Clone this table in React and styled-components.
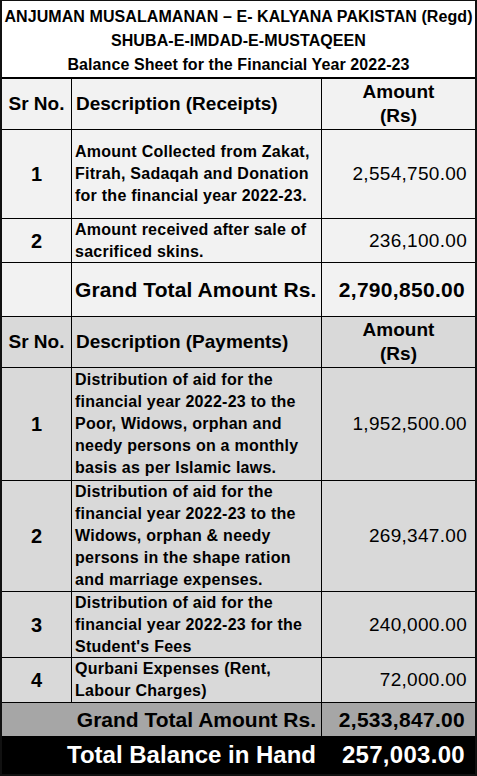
import styled, {createGlobalStyle} from 'styled-components';

const GlobalStyle = createGlobalStyle`
    html, body {
        margin: 0;
        padding: 0;
        background: #ffffff;
    }
    * {
        box-sizing: border-box;
    }
`;

const Sheet = styled.div`
    width: 477px;
    border: 2px solid #111;
    border-top-width: 1px;
    font-family: "Liberation Sans", Arial, sans-serif;
    color: #000;
    display: flex;
    flex-direction: column;
`;

const Title = styled.div`
    height: 78px;
    padding-top: 4px;
    background: #fff;
    border-bottom: 2px solid #000;
    text-align: center;
    font-weight: bold;
    font-size: 16px;
    line-height: 24px;
    letter-spacing: 0.08px;
    white-space: nowrap;
`;

const Row = styled.div`
    display: grid;
    grid-template-columns: 70px 250px 153px;
    height: ${p => p.h}px;
    background: ${p => p.bg};
    color: ${p => p.fg || '#000'};
    border-bottom: ${p => p.noLine ? 'none' : '1px solid #000'};
`;

const SrCell = styled.div`
    border-right: 1px solid #000;
    display: flex;
    align-items: center;
    justify-content: center;
    font-weight: bold;
    font-size: ${p => p.head ? '19px' : '20px'};
`;

const DescCell = styled.div`
    border-right: 1px solid #000;
    display: flex;
    align-items: center;
    padding-left: ${p => p.head ? '4px' : '3px'};
    font-weight: bold;
    font-size: ${p => p.size || 16}px;
    letter-spacing: ${p => p.spacing ?? 0.25}px;
    line-height: 22px;
    white-space: pre-line;
`;

const SpanLabel = styled.div`
    grid-column: 1 / 3;
    border-right: ${p => p.line ? '1px solid #000' : 'none'};
    display: flex;
    align-items: center;
    justify-content: flex-end;
    padding-right: ${p => p.pad}px;
    font-weight: bold;
    font-size: ${p => p.size}px;
    white-space: nowrap;
`;

const AmtCell = styled.div`
    display: flex;
    align-items: center;
    justify-content: ${p => p.head ? 'center' : 'flex-end'};
    text-align: center;
    padding-right: ${p => p.head ? 0 : (p.pad || 8)}px;
    font-weight: ${p => p.bold ? 'bold' : 'normal'};
    font-size: ${p => p.size || 19}px;
    letter-spacing: ${p => p.head ? 0 : 0.3}px;
    line-height: 24px;
    white-space: pre-line;
`;

const receipts = [
    {sr: '1', h: 89, text: 'Amount Collected from Zakat,\nFitrah, Sadaqah and Donation\nfor the financial year 2022-23.', amt: '2,554,750.00'},
    {sr: '2', h: 44, text: 'Amount received after sale of\nsacrificed skins.', amt: '236,100.00'},
];

const payments = [
    {sr: '1', h: 113, text: 'Distribution of aid for the\nfinancial year 2022-23 to the\nPoor, Widows, orphan and\nneedy persons on a monthly\nbasis as per Islamic laws.', amt: '1,952,500.00'},
    {sr: '2', h: 111, text: 'Distribution of aid for the\nfinancial year 2022-23 to the\nWidows, orphan & needy\npersons in the shape ration\nand marriage expenses.', amt: '269,347.00'},
    {sr: '3', h: 66, text: 'Distribution of aid for the\nfinancial year 2022-23 for the\nStudent\'s Fees', amt: '240,000.00'},
    {sr: '4', h: 45, text: 'Qurbani Expenses (Rent,\nLabour Charges)', amt: '72,000.00'},
];

const HeadRow = ({bg, label}) => (
    <Row h={51} bg={bg}>
        <SrCell head>Sr No.</SrCell>
        <DescCell head size={19} spacing={0}>{label}</DescCell>
        <AmtCell head bold>{'Amount\n(Rs)'}</AmtCell>
    </Row>
);

const App = () => (
    <>
        <GlobalStyle />
        <Sheet>
            <Title>
                <div>ANJUMAN MUSALAMANAN – E- KALYANA PAKISTAN (Regd)</div>
                <div>SHUBA-E-IMDAD-E-MUSTAQEEN</div>
                <div>Balance Sheet for the Financial Year 2022-23</div>
            </Title>

            <HeadRow bg="#f2f2f2" label="Description (Receipts)" />
            {receipts.map(r => (
                <Row key={r.sr} h={r.h} bg="#f2f2f2">
                    <SrCell>{r.sr}</SrCell>
                    <DescCell>{r.text}</DescCell>
                    <AmtCell>{r.amt}</AmtCell>
                </Row>
            ))}
            <Row h={54} bg="#f2f2f2">
                <SrCell />
                <DescCell size={21} spacing={0.1}>Grand Total Amount Rs.</DescCell>
                <AmtCell bold size={21} pad={10}>2,790,850.00</AmtCell>
            </Row>

            <HeadRow bg="#d9d9d9" label="Description (Payments)" />
            {payments.map(r => (
                <Row key={r.sr} h={r.h} bg="#d9d9d9">
                    <SrCell>{r.sr}</SrCell>
                    <DescCell>{r.text}</DescCell>
                    <AmtCell>{r.amt}</AmtCell>
                </Row>
            ))}
            <Row h={33} bg="#a6a6a6" noLine>
                <SpanLabel line size={21} pad={5}>Grand Total Amount Rs.</SpanLabel>
                <AmtCell bold size={21} pad={10}>2,533,847.00</AmtCell>
            </Row>
            <Row h={38} bg="#000" fg="#fff" noLine>
                <SpanLabel size={24} pad={6}>Total Balance in Hand</SpanLabel>
                <AmtCell bold size={24} pad={10}>257,003.00</AmtCell>
            </Row>
        </Sheet>
    </>
);

export default App;
